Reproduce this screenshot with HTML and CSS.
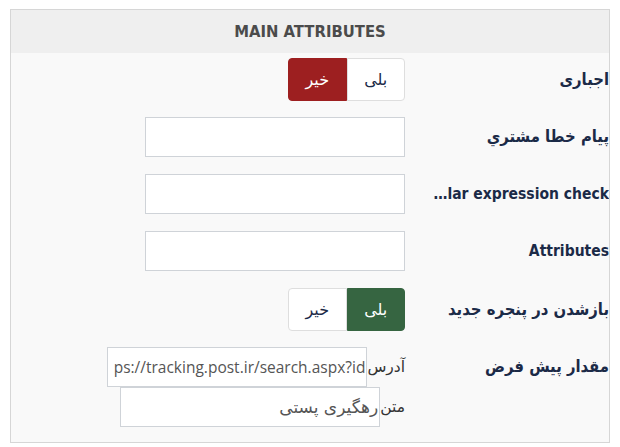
FILE: index.html
```html
<!DOCTYPE html>
<html lang="fa">
<head>
<meta charset="utf-8">
<title>Main attributes</title>
<link rel="stylesheet" href="styles.css">
</head>
<body>
<section class="panel" dir="rtl">
  <header class="panel-head" dir="ltr">MAIN ATTRIBUTES</header>
  <div class="panel-body">
    <div class="row row-toggle">
      <label class="label">اجباری</label>
      <div class="toggle">
        <span class="opt">بلی</span>
        <span class="opt opt-no">خیر</span>
      </div>
    </div>
    <div class="row">
      <label class="label">پیام خطا مشتري</label>
      <input class="field" type="text">
    </div>
    <div class="row">
      <label class="label label-en">Regular expression check</label>
      <input class="field" type="text">
    </div>
    <div class="row">
      <label class="label label-en">Attributes</label>
      <input class="field" type="text">
    </div>
    <div class="row row-toggle">
      <label class="label">بازشدن در پنجره جدید</label>
      <div class="toggle">
        <span class="opt opt-yes">بلی</span>
        <span class="opt">خیر</span>
      </div>
    </div>
    <div class="row row-last">
      <label class="label">مقدار پیش فرض</label>
      <div class="stack">
        <div class="sub">
          <span class="sub-label">آدرس</span>
          <input class="field field-sub" type="text" value="https://tracking.post.ir/search.aspx?id">
        </div>
        <div class="sub">
          <span class="sub-label">متن</span>
          <input class="field field-sub field-fa" type="text" value="رهگیری پستی">
        </div>
      </div>
    </div>
  </div>
</section>
</body>
</html>
```

FILE: styles.css
```css
html, body {
  margin: 0;
  padding: 0;
  background: #ffffff;
}

body {
  font-family: "DejaVu Sans", "Noto Sans", sans-serif;
}

.panel {
  box-sizing: border-box;
  width: 600px;
  margin: 9px 0 0 10px;
  border: 1px solid #d6d6d6;
  background: #f9f9f9;
}

.panel-head {
  height: 43px;
  line-height: 44px;
  background: #efefef;
  text-align: center;
  font-family: "DejaVu Sans Condensed", "DejaVu Sans", sans-serif;
  font-weight: bold;
  font-size: 16.5px;
  color: #4b4b4b;
}

.panel-body {
  padding: 5px 0 15px 0;
}

.row {
  display: flex;
  align-items: flex-start;
  margin-bottom: 17px;
}

.row-toggle {
  margin-bottom: 16px;
}

.row-last {
  margin-bottom: 0;
}

.label {
  box-sizing: border-box;
  flex: 0 0 204px;
  width: 204px;
  padding-left: 24px;
  line-height: 40px;
  white-space: nowrap;
  overflow: hidden;
  text-overflow: ellipsis;
  font-family: "DejaVu Sans Condensed", "DejaVu Sans", sans-serif;
  font-weight: bold;
  font-size: 16.5px;
  color: #1b2a47;
}

.label-en {
  font-size: 15.5px;
}

.row-toggle .label {
  line-height: 43px;
}

.toggle {
  display: flex;
  width: 117px;
  height: 43px;
}

.opt {
  box-sizing: border-box;
  flex: 1 1 0;
  display: flex;
  align-items: center;
  justify-content: center;
  background: #ffffff;
  border: 1px solid #dedede;
  font-size: 16px;
  color: #1b2a47;
}

.opt:first-child {
  border-radius: 0 4px 4px 0;
}

.opt:last-child {
  border-radius: 4px 0 0 4px;
}

.opt-no {
  background: #9d1f20;
  border-color: #9d1f20;
  color: #ffffff;
}

.opt-yes {
  background: #366541;
  border-color: #366541;
  color: #ffffff;
}

.field {
  box-sizing: border-box;
  width: 260px;
  height: 40px;
  margin: 0;
  padding: 0 6px;
  border: 1px solid #cfd3d8;
  border-radius: 0;
  background: #ffffff;
  font-family: "Open Sans", "DejaVu Sans", sans-serif;
  font-size: 15.5px;
  color: #555555;
  outline: none;
}

.stack {
  display: flex;
  flex-direction: column;
}

.sub {
  display: flex;
  align-items: center;
}

.sub-label {
  font-size: 15.5px;
  color: #333333;
}

.field-sub {
  padding: 0 1px 0 6px;
}

.field-fa {
  font-family: "DejaVu Sans", sans-serif;
  font-size: 17px;
}
```
